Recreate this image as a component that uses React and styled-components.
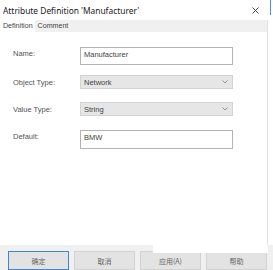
import React from "react";
import styled, { createGlobalStyle } from "styled-components";

const Global = createGlobalStyle`
  html, body { margin: 0; padding: 0; background: #fff; }
  body { width: 273px; height: 270px; overflow: hidden; font-family: "Liberation Sans", Arial, sans-serif; }
`;

const Window = styled.div`
  position: relative;
  width: 273px;
  height: 270px;
  display: flex;
  flex-direction: column;
  background: #fff;
`;

const TitleBar = styled.div`
  height: 20px;
  display: flex;
  align-items: center;
  justify-content: space-between;
  padding: 0 10px 0 3px;
  box-sizing: border-box;
  width: 269px;
`;

const Title = styled.span`
  font-family: "Noto Sans", sans-serif;
  font-size: 8.4px;
  color: #222;
  white-space: nowrap;
`;

const BlueEdge = styled.div`
  position: absolute;
  right: 2px;
  top: 0;
  width: 1px;
  height: 15px;
  background: #4a90d6;
`;

const Body = styled.div`
  flex: 1;
  display: flex;
  flex-direction: column;
  width: 268px;
  border-right: 1px solid #e2e2e2;
  box-sizing: border-box;
`;

const TabStrip = styled.div`
  height: 12px;
  background: #f0f0f0;
  display: flex;
  align-items: stretch;
`;

const Tab = styled.div`
  font-size: 7.1px;
  color: #444;
  display: flex;
  align-items: center;
  padding: ${(p) => (p.$active ? "0 2px 0 3px" : "0 3px")};
  background: ${(p) => (p.$active ? "#fff" : "#f0f0f0")};
`;

const Content = styled.div`
  flex: 1;
  padding: 15px 0 0 13px;
  display: flex;
  flex-direction: column;
`;

const Row = styled.div`
  display: grid;
  grid-template-columns: 67px 153px;
  align-items: start;
  margin-top: ${(p) => p.$mt || 0}px;
`;

const Label = styled.span`
  font-size: 7.5px;
  color: #555;
  padding-top: ${(p) => p.$pt || 0}px;
  line-height: 9px;
`;

const TextBox = styled.div`
  height: ${(p) => p.$h}px;
  box-sizing: border-box;
  border: 1px solid #b4b4b4;
  background: #fff;
  font-size: 7.5px;
  color: #444;
  padding: 2px 3px;
  line-height: 9px;
`;

const Select = styled.div`
  height: 14px;
  box-sizing: border-box;
  border: 1px solid #d3d3d3;
  background: #e6e6e6;
  font-size: 7.5px;
  color: #444;
  padding: 0 3px;
  display: flex;
  align-items: center;
  justify-content: space-between;
`;

const Chevron = styled.svg`
  width: 6px;
  height: 4px;
  margin-right: 1px;
`;

const Footer = styled.div`
  height: 25px;
  background: #f0f0f0;
  display: flex;
  align-items: flex-end;
  gap: 5px;
  padding: 0 5px 0 8px;
  width: 273px;
  box-sizing: border-box;
  position: relative;
`;

const Button = styled.div`
  width: 61px;
  height: 19px;
  box-sizing: border-box;
  border: 1px solid ${(p) => (p.$primary ? "#3d87d0" : "#d2d2d2")};
  background: #e3e3e3;
  display: flex;
  align-items: center;
  justify-content: center;
  font-family: "Noto Sans CJK SC", "Noto Sans", sans-serif;
  font-size: 7px;
  color: #666;
`;

const Patch = styled.div`
  position: absolute;
  left: 153px;
  top: 0;
  width: 115px;
  height: 8px;
  background: #fff;
`;

const Chev = () => (
  <Chevron viewBox="0 0 6 4">
    <path d="M0.5 0.5 L3 3 L5.5 0.5" fill="none" stroke="#888" strokeWidth="0.9" />
  </Chevron>
);

export default function App() {
  return (
    <Window>
      <Global />
      <BlueEdge />
      <TitleBar>
        <Title>Attribute Definition 'Manufacturer'</Title>
        <svg width="7" height="7" viewBox="0 0 7 7">
          <path d="M0.5 0.5 L6.5 6.5 M6.5 0.5 L0.5 6.5" stroke="#333" strokeWidth="0.9" />
        </svg>
      </TitleBar>
      <Body>
        <TabStrip>
          <Tab $active>Definition</Tab>
          <Tab>Comment</Tab>
        </TabStrip>
        <Content>
          <Row>
            <Label $pt={2}>Name:</Label>
            <TextBox $h={18}>Manufacturer</TextBox>
          </Row>
          <Row $mt={10}>
            <Label $pt={3}>Object Type:</Label>
            <Select>
              Network
              <Chev />
            </Select>
          </Row>
          <Row $mt={13}>
            <Label $pt={3}>Value Type:</Label>
            <Select>
              String
              <Chev />
            </Select>
          </Row>
          <Row $mt={14}>
            <Label $pt={2}>Default:</Label>
            <TextBox $h={19}>BMW</TextBox>
          </Row>
        </Content>
      </Body>
      <Footer>
        <Patch />
        <Button $primary>确定</Button>
        <Button>取消</Button>
        <Button>应用(A)</Button>
        <Button>帮助</Button>
      </Footer>
    </Window>
  );
}
